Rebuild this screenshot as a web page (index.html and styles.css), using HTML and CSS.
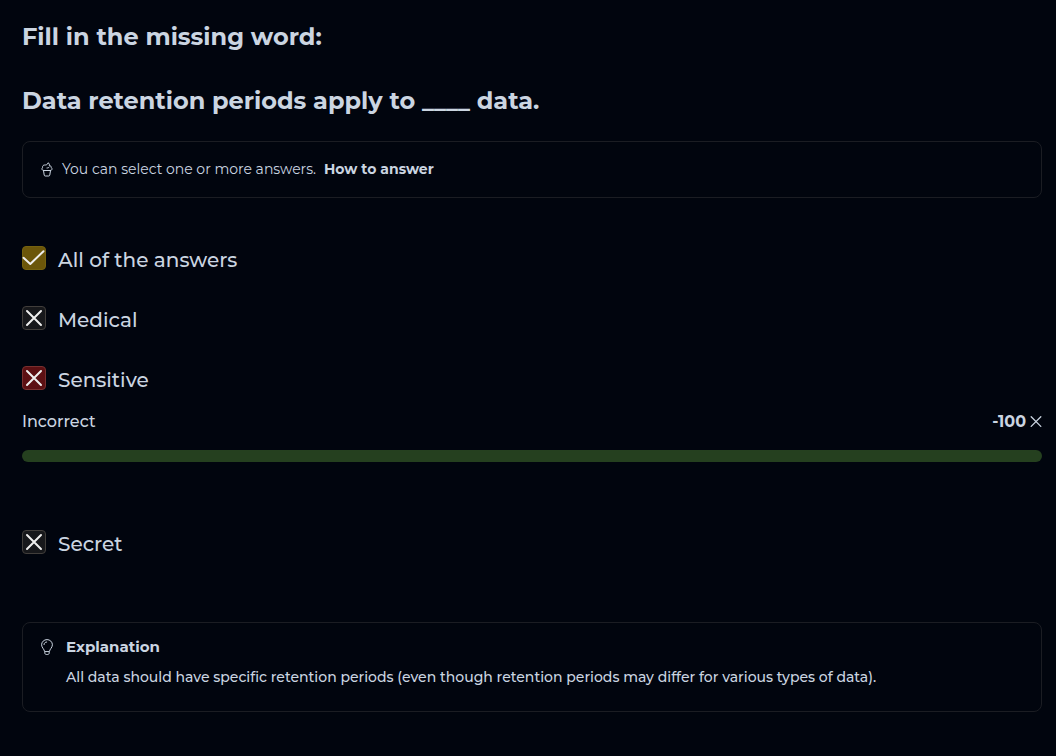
FILE: index.html
```html
<!DOCTYPE html>
<html lang="en">
<head>
<meta charset="utf-8">
<meta name="viewport" content="width=device-width, initial-scale=1">
<title>Data retention question</title>
<link rel="stylesheet" href="styles.css">
</head>
<body>
<main class="quiz">
  <header class="question">
    <h1>Fill in the missing word:</h1>
    <h1>Data retention periods apply to ____ data.</h1>
  </header>

  <section class="panel hint">
    <svg class="hint-icon" viewBox="0 0 12 16" aria-hidden="true"><path d="M2.500 8.500C.8 8.500.5 6.500 1.500 5.700 1.300 4 2.300 3 3.700 3 5 3 6.800 2.800 7 .8 8.300 1.300 8.800 2.600 8.200 3.600 9.700 3.600 10.600 4.600 10.300 5.700 11.500 6.500 11.200 8.500 9.500 8.500ZM6 6C7 6 7.800 5.700 8.300 5M2.500 8.500 3.200 13C3.300 13.700 3.700 14 4.200 14H7.800C8.300 14 8.700 13.700 8.800 13L9.500 8.500"/></svg>
    <p>You can select one or more answers.</p>
    <a href="#how">How to answer</a>
  </section>

  <section class="answers" aria-label="Answers">
    <label class="answer">
      <span class="box"><input class="tick missed" type="checkbox" checked><svg class="mark" viewBox="0 0 24 24" aria-hidden="true"><path d="M1.500 11.800 8.300 18 21.500 5.200"/></svg></span>
      <span class="text">All of the answers</span>
    </label>
    <label class="answer">
      <span class="box"><input class="tick" type="checkbox"><svg class="mark" viewBox="0 0 24 24" aria-hidden="true"><path d="M5 5 19 19M19 5 5 19"/></svg></span>
      <span class="text">Medical</span>
    </label>
    <div class="graded">
      <label class="answer">
        <span class="box"><input class="tick wrong" type="checkbox" checked><svg class="mark" viewBox="0 0 24 24" aria-hidden="true"><path d="M5 5 19 19M19 5 5 19"/></svg></span>
        <span class="text">Sensitive</span>
      </label>
      <div class="result">
        <label for="score">Incorrect</label>
        <span class="points"><strong>-100</strong><svg class="cross" viewBox="0 0 12 12" aria-hidden="true"><path d="M1.200 .8 10.800 10.400M10.800 .8 1.200 10.400"/></svg></span>
      </div>
      <progress id="score" class="bar" value="100" max="100"></progress>
    </div>
    <label class="answer">
      <span class="box"><input class="tick" type="checkbox"><svg class="mark" viewBox="0 0 24 24" aria-hidden="true"><path d="M5 5 19 19M19 5 5 19"/></svg></span>
      <span class="text">Secret</span>
    </label>
  </section>

  <section class="panel explanation">
    <svg class="bulb" viewBox="0 0 12 16" aria-hidden="true"><path d="M3.500 12.200c0-2-2.900-3.400-2.900-6.400a5.400 5.200 0 0 1 10.800 0c0 3-2.900 4.400-2.900 6.400ZM3 5.600C3 4.100 4.200 3 5.700 3M3.800 13.400v.5c0 1 .7 1.600 1.500 1.600h1.400c.8 0 1.500-.6 1.500-1.600v-.5"/></svg>
    <div>
      <h2>Explanation</h2>
      <p>All data should have specific retention periods (even though retention periods may differ for various types of data).</p>
    </div>
  </section>
</main>
</body>
</html>
```
FILE: styles.css
```css
* { box-sizing: border-box; }
html { background: #01050e; }
body {
  margin: 0;
  color: #cbd5e1;
  font-family: Montserrat, Inter, sans-serif;
  font-weight: 500;
}
h1, h2, p { margin: 0; }
svg {
  fill: none;
  stroke: currentColor;
  stroke-linecap: round;
  stroke-linejoin: round;
}
.quiz { padding: 21px 14px 44px 22px; }
.question {
  display: flex;
  flex-direction: column;
  gap: 32px;
}
h1 {
  font-size: 24px;
  line-height: 32px;
  font-weight: 700;
}
.panel {
  display: flex;
  border: 1px solid #1b1d23;
  border-radius: 8px;
}
.hint {
  align-items: center;
  gap: 8px;
  margin-top: 24px;
  padding: 16px 18px;
  font-size: 14px;
  line-height: 23px;
}
.hint p { color: #cbd5e1; font-weight: 400; }
.hint a { color: inherit; font-weight: 700; text-decoration: none; }
.hint-icon, .bulb { flex: none; width: 12px; height: 16px; }
.hint-icon { margin-right: 1px; }
.answers {
  display: flex;
  flex-direction: column;
  gap: 30px;
  margin-top: 46px;
}
.answer {
  display: flex;
  gap: 12px;
  width: fit-content;
  font-size: 20px;
  line-height: 28px;
}
.box {
  display: grid;
  width: 24px;
  height: 24px;
  margin-top: 2px;
}
.tick, .mark {
  grid-area: 1 / 1;
  width: 24px;
  height: 24px;
  margin: 0;
}
.tick {
  appearance: none;
  border: 1px solid #413e3b;
  border-radius: 4px;
  background: #17181b;
}
.missed { border-color: #75620f; background: #6b560a; }
.wrong { border-color: #79302f; background: #5c1013; }
.mark {
  z-index: 1;
  color: #eeeeee;
  stroke-width: 2;
  pointer-events: none;
}
.text { padding-top: 2px; }
.graded { margin-bottom: 36px; }
.result {
  display: flex;
  justify-content: space-between;
  margin-top: 16px;
  font-size: 16px;
  line-height: 24px;
}
.points { display: flex; align-items: center; gap: 4px; }
.points strong { font-weight: 700; }
.cross { width: 12px; height: 12px; stroke-width: 1.3; }
.bar {
  display: block;
  width: 100%;
  height: 12px;
  margin-top: 16px;
  appearance: none;
  border: 0;
  border-radius: 6px;
  overflow: hidden;
  background: #25401f;
}
.bar::-webkit-progress-bar, .bar::-webkit-progress-value { background: #25401f; }
.bar::-moz-progress-bar { background: #25401f; }
.explanation {
  gap: 13px;
  margin-top: 64px;
  padding: 12px 18px 22px;
  font-size: 14px;
  line-height: 24px;
}
.bulb { margin-top: 4px; }
h2 { font-size: 15px; line-height: 24px; font-weight: 700; }
.explanation p { margin-top: 6px; }
```
